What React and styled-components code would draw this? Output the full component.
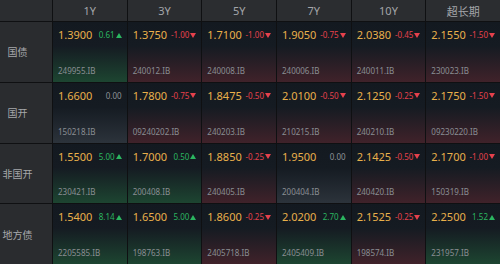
import styled, { createGlobalStyle } from "styled-components";

const GlobalStyle = createGlobalStyle`
  html, body {
    margin: 0;
    padding: 0;
    background: #111214;
  }
  body {
    font-family: "Noto Sans", "Noto Sans CJK SC", sans-serif;
  }
`;

const tenors = ["1Y", "3Y", "5Y", "7Y", "10Y", "超长期"];

const rows = [
  {
    name: "国债",
    cells: [
      ["1.3900", "0.61", "249955.IB"],
      ["1.3750", "-1.00", "240012.IB"],
      ["1.7100", "-1.00", "240008.IB"],
      ["1.9050", "-0.75", "240006.IB"],
      ["2.0380", "-0.45", "240011.IB"],
      ["2.1550", "-1.50", "230023.IB"],
    ],
  },
  {
    name: "国开",
    cells: [
      ["1.6600", "0.00", "150218.IB"],
      ["1.7800", "-0.75", "09240202.IB"],
      ["1.8475", "-0.50", "240203.IB"],
      ["2.0100", "-0.50", "210215.IB"],
      ["2.1250", "-0.25", "240210.IB"],
      ["2.1750", "-1.50", "09230220.IB"],
    ],
  },
  {
    name: "非国开",
    cells: [
      ["1.5500", "5.00", "230421.IB"],
      ["1.7000", "0.50", "200408.IB"],
      ["1.8850", "-0.25", "240405.IB"],
      ["1.9500", "0.00", "200404.IB"],
      ["2.1425", "-0.50", "240420.IB"],
      ["2.1700", "-1.00", "150319.IB"],
    ],
  },
  {
    name: "地方债",
    cells: [
      ["1.5400", "8.14", "2205585.IB"],
      ["1.6500", "5.00", "198763.IB"],
      ["1.8600", "-0.25", "2405718.IB"],
      ["2.0200", "2.70", "2405409.IB"],
      ["2.1525", "-0.25", "198574.IB"],
      ["2.2500", "1.52", "231957.IB"],
    ],
  },
];

const trendOf = (change) => {
  const n = parseFloat(change);
  if (n > 0) return "up";
  if (n < 0) return "down";
  return "flat";
};

const bottomTint = {
  up: "#1d4531",
  down: "#40222a",
  flat: "#2c333b",
};

const changeColor = {
  up: "#2bb560",
  down: "#e5414c",
  flat: "#8d9196",
};

const Board = styled.div`
  display: grid;
  grid-template-columns: 52px repeat(6, 1fr);
  grid-template-rows: 21px repeat(4, 1fr);
  gap: 1px;
  width: 500px;
  height: 264px;
  background: #0f1012;
`;

const Corner = styled.div`
  background: #2b2d30;
`;

const HeadCell = styled.div`
  display: flex;
  align-items: center;
  justify-content: center;
  background: #2b2d30;
  color: #a3a5a9;
  font-size: 11px;
`;

const RowLabel = styled.div`
  display: flex;
  align-items: center;
  justify-content: center;
  padding-right: 17px;
  background: #2a2c2f;
  color: #a6a8ab;
  font-size: 10px;
  white-space: nowrap;
`;

const Cell = styled.div`
  display: flex;
  flex-direction: column;
  justify-content: space-between;
  padding: 6px 5px 6px 5px;
  background: linear-gradient(
    to bottom,
    #131920 0%,
    #151b22 40%,
    ${(p) => bottomTint[p.$trend]} 100%
  );
  min-width: 0;
`;

const TopLine = styled.div`
  display: flex;
  align-items: center;
  justify-content: space-between;
`;

const Yield = styled.span`
  color: #e9b04b;
  font-size: 11px;
  line-height: 14px;
`;

const Change = styled.span`
  display: flex;
  align-items: center;
  gap: 1px;
  color: ${(p) => changeColor[p.$trend]};
  font-size: 8px;
  line-height: 10px;
`;

const Code = styled.span`
  color: #8a8e93;
  font-size: 8px;
  line-height: 11px;
  white-space: nowrap;
`;

const Arrow = ({ dir }) => (
  <svg width="6" height="5" viewBox="0 0 6 5">
    {dir === "up" ? (
      <polygon points="3,0 6,5 0,5" fill="currentColor" />
    ) : (
      <polygon points="0,0 6,0 3,5" fill="currentColor" />
    )}
  </svg>
);

const QuoteCell = ({ value, change, code }) => {
  const trend = trendOf(change);
  return (
    <Cell $trend={trend}>
      <TopLine>
        <Yield>{value}</Yield>
        <Change $trend={trend}>
          {change}
          {trend !== "flat" && <Arrow dir={trend} />}
        </Change>
      </TopLine>
      <Code>{code}</Code>
    </Cell>
  );
};

export default function App() {
  return (
    <>
      <GlobalStyle />
      <Board>
        <Corner />
        {tenors.map((t) => (
          <HeadCell key={t}>{t}</HeadCell>
        ))}
        {rows.map((row) => [
          <RowLabel key={row.name}>{row.name}</RowLabel>,
          ...row.cells.map(([value, change, code], i) => (
            <QuoteCell
              key={row.name + i}
              value={value}
              change={change}
              code={code}
            />
          )),
        ])}
      </Board>
    </>
  );
}
